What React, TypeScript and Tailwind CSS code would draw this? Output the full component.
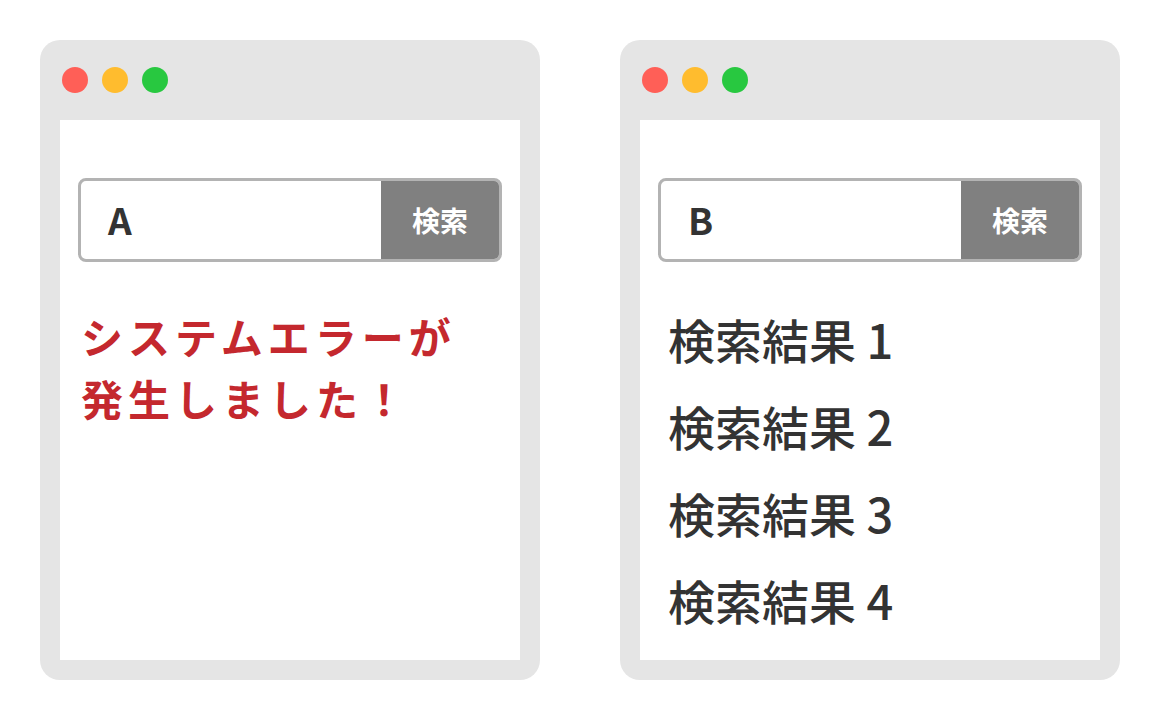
import React from 'react';

const FONT = { fontFamily: '"Noto Sans CJK JP", "Noto Sans", sans-serif' };

const Dots: React.FC = () => (
    <div className="h-20 flex items-center gap-[14px] pl-[22px]">
        <span className="w-[26px] h-[26px] rounded-full bg-[#ff5f57]" />
        <span className="w-[26px] h-[26px] rounded-full bg-[#ffbc2e]" />
        <span className="w-[26px] h-[26px] rounded-full bg-[#28c840]" />
    </div>
);

const SearchBox: React.FC<{ query: string }> = ({ query }) => (
    <div className="h-[84px] flex border-[3px] border-[#b3b3b3] rounded-[8px] overflow-hidden bg-white">
        <div className="flex-1 flex items-center pl-[27px] text-[37px] font-semibold text-[#333]">{query}</div>
        <div className="w-[118px] bg-[#808080] flex items-center justify-center text-white text-[28px] font-bold">検索</div>
    </div>
);

const BrowserWindow: React.FC<{ query: string; children: React.ReactNode }> = ({ query, children }) => (
    <div className="w-[500px] h-[640px] bg-[#e5e5e5] rounded-[20px] flex flex-col pb-5">
        <Dots />
        <div className="flex-1 mx-5 bg-white px-[18px] pt-[58px]">
            <SearchBox query={query} />
            {children}
        </div>
    </div>
);

export default function App() {
    return (
        <div className="w-[1160px] h-[720px] bg-white flex gap-20 pl-10 pt-10" style={FONT}>
            <BrowserWindow query="A">
                <p className="mt-[43px] pl-[3px] text-[42px] leading-[62px] font-bold tracking-[5px] text-[#c4282e]">
                    システムエラーが<br />発生しました！
                </p>
            </BrowserWindow>
            <BrowserWindow query="B">
                <ul className="mt-[33px] pl-[10px] text-[47px] leading-[87px] font-medium text-[#333]">
                    {[1, 2, 3, 4].map(n => (
                        <li key={n}>検索結果 {n}</li>
                    ))}
                </ul>
            </BrowserWindow>
        </div>
    );
}
